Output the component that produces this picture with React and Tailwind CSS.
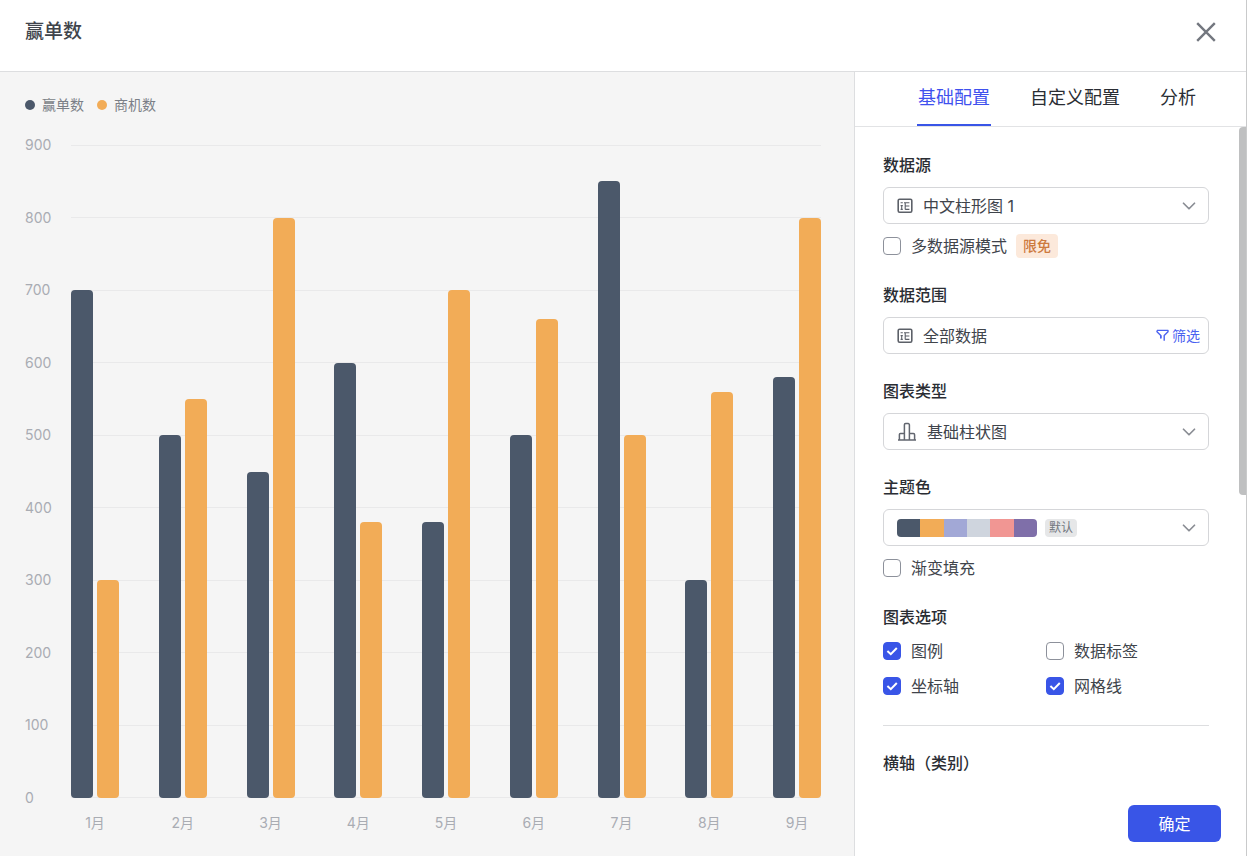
import { useState } from 'react';
import { ChevronDown } from 'lucide-react';

const months = [
  { name: '1月', won: 700, leads: 300 },
  { name: '2月', won: 500, leads: 550 },
  { name: '3月', won: 450, leads: 800 },
  { name: '4月', won: 600, leads: 380 },
  { name: '5月', won: 380, leads: 700 },
  { name: '6月', won: 500, leads: 660 },
  { name: '7月', won: 850, leads: 500 },
  { name: '8月', won: 300, leads: 560 },
  { name: '9月', won: 580, leads: 800 },
];

const MAX = 900;
const ticks = [900, 800, 700, 600, 500, 400, 300, 200, 100, 0];
const tabs = ['基础配置', '自定义配置', '分析'];

const toHeight = (value) => `${(value / MAX) * 100}%`;

const CloseIcon = () => (
  <svg width="20" height="20" viewBox="0 0 20 20" fill="none" stroke="currentColor" strokeWidth="2.4">
    <path d="M1.2 1.2 18.8 18.8M18.8 1.2 1.2 18.8" />
  </svg>
);

const TableIcon = () => (
  <svg className="shrink-0 text-[#5c6068]" width="16" height="16" viewBox="0 0 16 16" fill="none" stroke="currentColor">
    <rect x="1.2" y="1.2" width="13.6" height="13" rx="1.4" strokeWidth="1.6" />
    <path d="M3.6 4.8h2.2M7 4.8h5.4M3.6 7.6h2.2M4.7 7.6v4M3.6 11.4h2.2M8.2 4.8v6.6M8.2 8h4.2M8.2 11.4h4.2" strokeWidth="1.1" />
  </svg>
);

const ColumnIcon = () => (
  <svg className="shrink-0 text-[#62666f]" width="20" height="20" viewBox="0 0 20 20" fill="none" stroke="currentColor" strokeWidth="1.5" strokeLinejoin="round">
    <path d="M1 18h18M2.4 18v-5.4a1 1 0 0 1 1-1h4M7.4 18V2.8a1.2 1.2 0 0 1 1.2-1.2h2.6a1.2 1.2 0 0 1 1.2 1.2V18M12.4 11.6h4a1.2 1.2 0 0 1 1.2 1.2V18" />
  </svg>
);

const FilterIcon = () => (
  <svg width="13" height="13" viewBox="0 0 13 13" fill="none" stroke="currentColor" strokeWidth="1.4" strokeLinejoin="round">
    <path d="M1 1.4h11v1.4L8.2 6.4v5.4M1 1.4v1.4l3.8 3.6v2.8" />
    <path d="M4.8 6.4v3.2" />
  </svg>
);

const Chevron = () => (
  <ChevronDown size={22} strokeWidth={1.9} className="pointer-events-none ml-auto shrink-0 text-[#8a8d94]" />
);

const Checkbox = ({ label, defaultChecked = false, children }) => (
  <div className="flex h-6 items-center">
    <label className="flex items-center gap-[10px] text-base leading-6 text-[#40444b]">
      <span className="grid size-[18px] place-items-center">
        <input
          type="checkbox"
          defaultChecked={defaultChecked}
          className="peer col-start-1 row-start-1 size-[18px] appearance-none rounded border border-[#8d919b] bg-white checked:border-[#3955e7] checked:bg-[#3955e7]"
        />
        <svg
          className="pointer-events-none col-start-1 row-start-1 hidden text-white peer-checked:block"
          width="12"
          height="12"
          viewBox="0 0 12 12"
          fill="none"
          stroke="currentColor"
          strokeWidth="2"
        >
          <path d="M1.4 6 4.8 9.2 10.8 3" />
        </svg>
      </span>
      {label}
    </label>
    {children}
  </div>
);

const labelClass = 'block text-base leading-6 font-medium text-[#2a2d33]';

const Field = ({ id, label, children }) => (
  <div>
    {id ? (
      <label htmlFor={id} className={labelClass}>
        {label}
      </label>
    ) : (
      <h2 className={labelClass}>{label}</h2>
    )}
    <div className="mt-[10px] flex h-[37px] items-center rounded-md border border-[#d5d6d9] bg-white pr-2 pl-[13px] text-base text-[#40444b]">
      {children}
    </div>
  </div>
);

const Chart = () => (
  <section className="flex min-w-0 flex-1 flex-col bg-[#f5f5f5] pt-[23px] pr-[33px] pb-[23px] pl-[25px]">
    <div className="flex h-5 gap-[13px] text-sm text-[#7b7f87]">
      <span className="flex items-center gap-[7px]">
        <i className="size-[10px] rounded-full bg-[#4b586a]" />
        赢单数
      </span>
      <span className="flex items-center gap-[7px]">
        <i className="size-[10px] rounded-full bg-[#f2ac57]" />
        商机数
      </span>
    </div>

    <div className="relative mt-5 flex min-h-[400px] flex-1 flex-col justify-between">
      {ticks.map((tick) => (
        <div key={tick} className="flex h-5 items-center text-sm text-[#a9acb3]">
          <span className="w-[46px]">{tick}</span>
          <span className="h-px flex-1 bg-[#e9e9ea]" />
        </div>
      ))}
      {/* Bars sit on top of the grid lines */}
      <div className="absolute top-[10px] right-0 bottom-[10px] left-[46px] flex justify-between">
        {months.map((month) => (
          <div key={month.name} className="flex h-full items-end gap-1">
            <div className="w-[22px] rounded bg-[#4b586a]" style={{ height: toHeight(month.won) }} />
            <div className="w-[22px] rounded bg-[#f2ac57]" style={{ height: toHeight(month.leads) }} />
          </div>
        ))}
      </div>
    </div>

    <div className="mt-[5px] flex h-5 justify-between pl-[46px] text-sm text-[#a9acb3]">
      {months.map((month) => (
        <span key={month.name} className="w-12 text-center">
          {month.name}
        </span>
      ))}
    </div>
  </section>
);

const ConfigPanel = () => {
  const [activeTab, setActiveTab] = useState('基础配置');

  return (
    <aside className="flex w-[393px] shrink-0 flex-col border-l border-[#dddee0] bg-white">
      <nav className="flex gap-[38px] border-b border-[#e2e3e5] pl-[62px]">
        {tabs.map((tab) => (
          <button
            key={tab}
            type="button"
            onClick={() => setActiveTab(tab)}
            className={`border-b-2 px-px pt-3 pb-3 text-lg leading-7 ${
              activeTab === tab ? 'border-[#3955e7] text-[#3f51ee]' : 'border-transparent text-[#2a2d33]'
            }`}
          >
            {tab}
          </button>
        ))}
      </nav>

      <div className="relative flex flex-1 flex-col">
        <div className="absolute top-0 right-0 h-[368px] w-2 rounded-l bg-[#bfc0c1]" />

        <form className="flex flex-col gap-[25px] pt-[26px] pr-[38px] pl-7">
          <div>
            <Field id="source" label="数据源">
              <TableIcon />
              <select id="source" className="ml-[10px] flex-1 appearance-none bg-transparent">
                <option>中文柱形图 1</option>
              </select>
              <Chevron />
            </Field>
            <div className="mt-[10px]">
              <Checkbox label="多数据源模式">
                <span className="ml-[9px] rounded bg-[#fce9db] px-[7px] text-sm leading-6 font-medium text-[#cd7a3f]">限免</span>
              </Checkbox>
            </div>
          </div>

          <Field label="数据范围">
            <TableIcon />
            <span className="ml-[10px]">全部数据</span>
            <button type="button" className="ml-auto flex items-center gap-[3px] text-sm text-[#4a61f0]">
              <FilterIcon />
              筛选
            </button>
          </Field>

          <Field id="type" label="图表类型">
            <ColumnIcon />
            <select id="type" className="ml-[10px] flex-1 appearance-none bg-transparent">
              <option>基础柱状图</option>
            </select>
            <Chevron />
          </Field>

          <div>
            <Field id="theme" label="主题色">
              <span className="flex h-[18px] w-[140px] overflow-hidden rounded">
                <i className="flex-1 bg-[#4b586a]" />
                <i className="flex-1 bg-[#f2ac57]" />
                <i className="flex-1 bg-[#a2a8d6]" />
                <i className="flex-1 bg-[#cfd5de]" />
                <i className="flex-1 bg-[#f19693]" />
                <i className="flex-1 bg-[#7f6fa9]" />
              </span>
              <select id="theme" className="ml-2 h-[18px] w-8 appearance-none rounded bg-[#e6e7e8] px-1 text-xs leading-[18px] text-[#73777f]">
                <option>默认</option>
              </select>
              <Chevron />
            </Field>
            <div className="mt-[10px]">
              <Checkbox label="渐变填充" />
            </div>
          </div>

          <fieldset>
            <legend className={labelClass}>图表选项</legend>
            <div className="mt-[10px] grid grid-cols-2 gap-y-[11px]">
              <Checkbox label="图例" defaultChecked />
              <Checkbox label="数据标签" />
              <Checkbox label="坐标轴" defaultChecked />
              <Checkbox label="网格线" defaultChecked />
            </div>
          </fieldset>

          <hr className="mt-0.5 border-[#dddee0]" />

          <h2 className={labelClass}>横轴（类别）</h2>
        </form>

        <footer className="mt-auto flex justify-end pt-4 pr-[26px] pb-[14px]">
          <button type="button" className="h-[37px] w-[93px] rounded-md bg-[#3955e7] text-base text-white">
            确定
          </button>
        </footer>
      </div>
    </aside>
  );
};

export default function App() {
  return (
    <div className="relative flex min-h-screen flex-col bg-white font-['Inter','Noto_Sans_CJK_SC',sans-serif]">
      <header className="flex items-center justify-between border-b border-[#dddee0] pt-[18px] pr-[31px] pb-[25px] pl-[25px]">
        <h1 className="text-[19px] leading-7 font-medium text-[#40444b]">赢单数</h1>
        <button type="button" aria-label="关闭" className="text-[#73777f]">
          <CloseIcon />
        </button>
      </header>
      <main className="flex flex-1">
        <Chart />
        <ConfigPanel />
      </main>
      <div className="absolute inset-y-0 right-0 w-px bg-[#c9cacb]" />
    </div>
  );
}
